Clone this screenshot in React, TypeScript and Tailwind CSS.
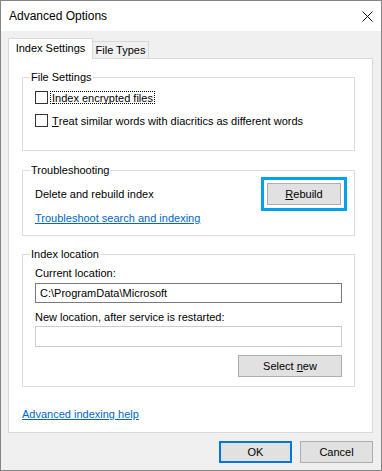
import { ReactNode } from "react";

function GroupBox({ label, className, children }: { label: string; className?: string; children: ReactNode }) {
  return (
    <div className={`relative border border-[#dcdcdc] w-[333px] ${className || ""}`}>
      <span className="absolute -top-[9px] left-[7px] px-px bg-white leading-[16px]">{label}</span>
      {children}
    </div>
  );
}

function CheckRow({ children, focused }: { children: ReactNode; focused?: boolean }) {
  return (
    <div className="flex items-center h-[13px]">
      <div className="w-[13px] h-[13px] border border-[#333] bg-white shrink-0" />
      <span
        className={`ml-[2px] h-[13px] flex items-center leading-[16px] px-px ${
          focused ? "border border-dotted border-black" : "border border-transparent"
        }`}
      >
        {children}
      </span>
    </div>
  );
}

function WinButton({ children, className }: { children: ReactNode; className?: string }) {
  return (
    <div
      className={`flex items-center justify-center bg-[#e1e1e1] border border-[#adadad] leading-[16px] ${className || ""}`}
    >
      {children}
    </div>
  );
}

export default function App() {
  return (
    <div className="w-[382px] h-[471px] border border-[#858585] bg-[#f0f0f0] flex flex-col font-['Liberation_Sans',Arial,sans-serif] text-[11px] text-black">
      {/* Title bar */}
      <div className="h-[30px] bg-white flex items-center justify-between pl-2 pr-[7px] shrink-0">
        <span className="leading-[16px] text-[12px]">Advanced Options</span>
        <svg width="11" height="11" viewBox="0 0 11 11" className="mr-px">
          <path d="M0.5 0.5 L10.5 10.5 M10.5 0.5 L0.5 10.5" stroke="#111" strokeWidth="1" fill="none" />
        </svg>
      </div>

      {/* Body */}
      <div className="flex-1 px-[7px] pt-[7px]">
        {/* Tabs */}
        <div className="flex items-end h-[20px]">
          <div className="relative z-10 w-[85px] h-[21px] -mb-px bg-white border border-b-0 border-[#d9d9d9] flex items-center justify-center pb-[2px] leading-[16px]">
            Index Settings
          </div>
          <div className="w-[56px] h-[17px] bg-[#f0f0f0] border border-l-0 border-b-0 border-[#d9d9d9] flex items-center justify-center leading-[16px]">
            File Types
          </div>
        </div>

        {/* Tab panel */}
        <div className="w-[365px] h-[375px] bg-white border border-[#d9d9d9] pl-[13px] pt-[18px]">
          <GroupBox label="File Settings" className="h-[74px]">
            <div className="pl-3 pt-[13px] flex flex-col gap-[10px]">
              <CheckRow focused>
                <span className="underline">I</span>ndex encrypted files
              </CheckRow>
              <CheckRow>
                <span className="underline">T</span>reat similar words with diacritics as different words
              </CheckRow>
            </div>
          </GroupBox>

          <GroupBox label="Troubleshooting" className="h-[66px] mt-[19px]">
            <div className="pl-3 pr-[7px] pt-[6px]">
              <div className="flex items-center justify-between">
                <span className="leading-[16px]">Delete and rebuild index</span>
                <div className="border-[3px] border-[#00a2ed] p-[3px]">
                  <WinButton className="w-[74px] h-[22px]">
                    <span>
                      <span className="underline">R</span>ebuild
                    </span>
                  </WinButton>
                </div>
              </div>
              <div className="-mt-px leading-[16px] text-[#0066cc] underline">Troubleshoot search and indexing</div>
            </div>
          </GroupBox>

          <GroupBox label="Index location" className="h-[133px] mt-[18px]">
            <div className="pl-3 pt-[10px] w-[320px] flex flex-col">
              <span className="leading-[16px]">Current location:</span>
              <div className="mt-[2px] h-[20px] w-[307px] border border-[#7a7a7a] bg-white flex items-center pl-[4px] leading-[16px]">
                C:\ProgramData\Microsoft
              </div>
              <span className="mt-[6px] leading-[16px]">New location, after service is restarted:</span>
              <div className="mt-px h-[21px] w-[307px] border border-[#cccccc] bg-white" />
              <div className="w-[307px] flex justify-end mt-[8px]">
                <WinButton className="w-[104px] h-[22px]">
                  <span>
                    Select <span className="underline">n</span>ew
                  </span>
                </WinButton>
              </div>
            </div>
          </GroupBox>

          <div className="mt-[19px] leading-[16px] text-[#0066cc] underline">Advanced indexing help</div>
        </div>

        {/* Dialog buttons */}
        <div className="flex justify-end gap-[8px] mt-[8px] pr-px">
          <WinButton className="w-[73px] h-[22px] !border-2 !border-[#0078d7]">OK</WinButton>
          <WinButton className="w-[73px] h-[22px]">Cancel</WinButton>
        </div>
      </div>
    </div>
  );
}
